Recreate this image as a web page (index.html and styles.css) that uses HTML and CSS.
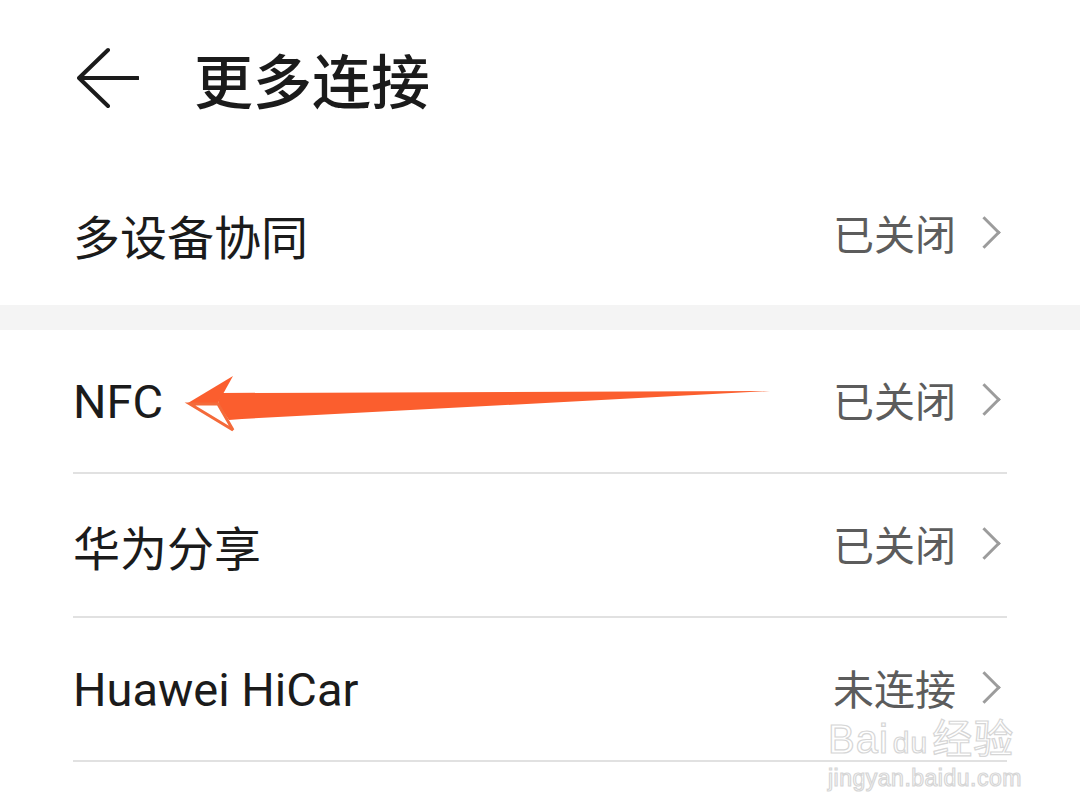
FILE: index.html
```html
<!DOCTYPE html>
<html>
<head>
  <title>更多连接</title>
  <link rel="stylesheet" href="styles.css">
</head>
<body>
  <div class="page">
    <div class="header">
      <svg class="back" width="62" height="62" viewBox="0 0 62 62">
        <path d="M31 3 L2 31 L31 59 M2 31 L61 31" fill="none" stroke="#1b1b1b" stroke-width="4" stroke-linecap="round" stroke-linejoin="round"/>
      </svg>
      <h1>更多连接</h1>
    </div>

    <div class="group">
      <div class="row">
        <span class="label">多设备协同</span>
        <span class="value">已关闭<i class="chev"></i></span>
      </div>
    </div>

    <div class="band"></div>

    <div class="group">
      <div class="row line">
        <span class="label latin">NFC</span>
        <span class="value">已关闭<i class="chev"></i></span>
      </div>
      <div class="row line">
        <span class="label">华为分享</span>
        <span class="value">已关闭<i class="chev"></i></span>
      </div>
      <div class="row line">
        <span class="label latin">Huawei HiCar</span>
        <span class="value">未连接<i class="chev"></i></span>
      </div>
    </div>
  </div>

  <!-- annotation arrow drawn over the NFC row -->
  <svg class="pointer" width="1080" height="810" viewBox="0 0 1080 810">
    <path d="M221 393 L770 391 L242 419 L229 420 L218 404 Z" fill="#fb5e2e"/>
    <path d="M188 403 L233 376 L218 403 Z" fill="#fb5e2e"/>
    <path d="M190 404 L218 404 L233 430 Z" fill="#fff" stroke="#f46a3a" stroke-width="3" stroke-linejoin="miter"/>
  </svg>

  <div class="watermark">
    <div class="wm-brand">Bai<span class="paw">du</span>经验</div>
    <div class="wm-url">jingyan.baidu.com</div>
  </div>
</body>
</html>
```

FILE: styles.css
```css
body {
  margin: 0;
  background: #fff;
  font-family: "Noto Sans CJK SC", "Noto Sans", sans-serif;
  color: #1b1b1b;
}
.page {
  width: 1080px;
  height: 810px;
  overflow: hidden;
}

.header {
  height: 163px;
  display: flex;
  align-items: center;
  padding-left: 77px;
  box-sizing: border-box;
}
.header .back {
  margin-top: -8px;
}
.header h1 {
  margin: -6px 0 0 55px;
  font-size: 59px;
  font-weight: 500;
  line-height: 1;
}

.band {
  height: 25px;
  background: #f4f4f4;
}

.row {
  height: 142px;
  margin: 0 73px;
  display: flex;
  align-items: center;
  justify-content: space-between;
}
.row.line {
  border-bottom: 2px solid #e1e1e1;
}
.label {
  font-size: 47px;
  line-height: 1;
  color: #1b1b1b;
}
.label.latin {
  font-family: Roboto, "Noto Sans CJK SC", sans-serif;
}
.value {
  display: flex;
  align-items: center;
  font-size: 41px;
  color: #5c5c5c;
  line-height: 1;
  margin-right: 7px;
  margin-top: -4px;
}
.chev {
  display: inline-block;
  width: 20px;
  height: 20px;
  border-top: 3px solid #9c9c9c;
  border-right: 3px solid #9c9c9c;
  transform: rotate(45deg);
  margin-left: 17px;
  margin-right: 4px;
}

.pointer {
  position: absolute;
  left: 0;
  top: 0;
}

.watermark {
  position: absolute;
  left: 828px;
  top: 718px;
  color: rgba(255, 255, 255, 0.6);
  -webkit-text-stroke: 1.2px #d6d6d6;
  font-family: "Liberation Sans", "Noto Sans CJK SC", sans-serif;
}
.wm-brand {
  font-size: 40px;
  line-height: 42px;
  letter-spacing: 1px;
}
.wm-brand .paw {
  font-size: 30px;
  margin: 0 4px;
}
.wm-url {
  font-size: 23px;
  line-height: 28px;
  letter-spacing: 0.5px;
}
```
